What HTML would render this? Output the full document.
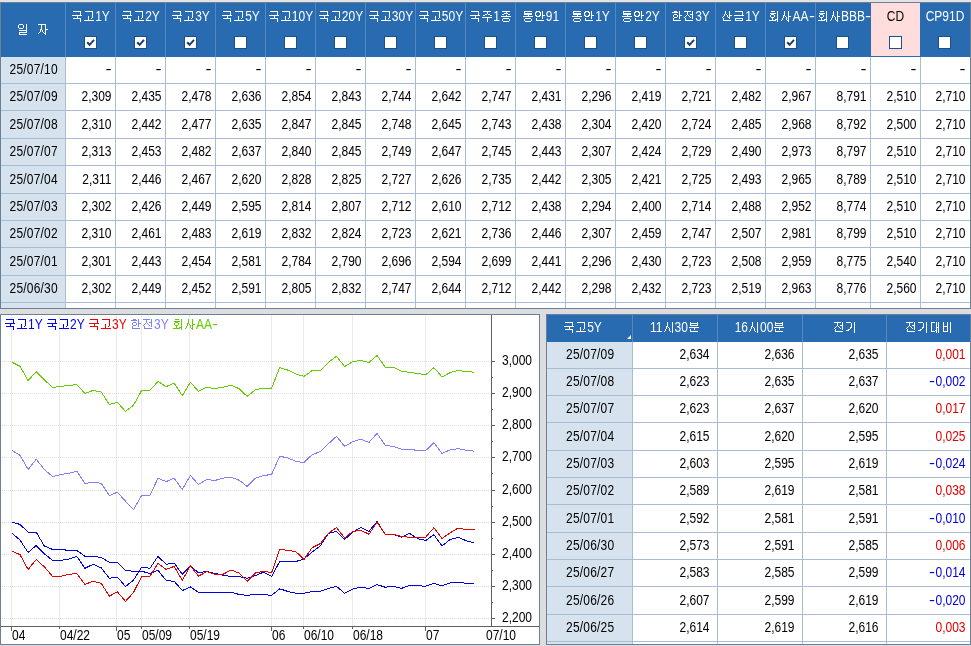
<!DOCTYPE html>
<html lang="ko"><head><meta charset="utf-8"><title>채권 금리</title>
<style>

html,body{margin:0;padding:0}
body{width:971px;height:646px;position:relative;overflow:hidden;background:#dddde0;font-family:"Liberation Sans",sans-serif;font-size:12px;color:#000}
div,span{box-sizing:border-box}
.abs,.c,.n,.d,.h,.ln{position:absolute}
.panel{will-change:transform;position:absolute;overflow:hidden;background:#fff}
.k{display:inline-block;vertical-align:-1px}
.c{white-space:nowrap;line-height:12px;height:12px}
.n{text-align:right}
.d{text-align:center}
.h{text-align:center;color:#fff}
.ln{background:#a8bdd1}
.cb{position:absolute;width:13px;height:13px;background:#fff;border:1px solid #1d4f8c}
.red{color:#e00000}.blue{color:#0000d8}
.n,.d,.t,.s{transform:scaleY(1.16);transform-origin:0 10.2px}
.t{display:inline-block;line-height:12px}
.wl{transform:scale(1.5,1.16);transform-origin:0 10.2px}
.wr{display:inline-block;transform:scaleX(1.5);transform-origin:100% 50%}
.dash{transform:scale(1.5,1.16);transform-origin:100% 10.2px}
.d{letter-spacing:0.2px;padding-left:1.4px}

</style></head><body>
<div class="abs" style="left:0;top:0;width:971px;height:2px;background:#e3e3e6"></div>
<div class="panel" id="t1" style="left:0px;top:2px;width:971px;height:307px;border:1px solid #6b8096">
<div class="abs" style="left:0px;top:0px;width:969px;height:54px;background:#296bb0"></div>
<div class="abs" style="left:0px;top:54px;width:64px;height:251px;background:#d6e2ee"></div>
<div class="abs" style="left:870px;top:0px;width:49px;height:53px;background:#ffdddd"></div>
<div class="abs" style="left:64px;top:0px;width:1px;height:54px;background:#5289c5"></div>
<div class="ln" style="left:64px;top:54px;width:1px;height:251px"></div>
<div class="abs" style="left:114px;top:0px;width:1px;height:54px;background:#5289c5"></div>
<div class="ln" style="left:114px;top:54px;width:1px;height:251px"></div>
<div class="abs" style="left:164px;top:0px;width:1px;height:54px;background:#5289c5"></div>
<div class="ln" style="left:164px;top:54px;width:1px;height:251px"></div>
<div class="abs" style="left:214px;top:0px;width:1px;height:54px;background:#5289c5"></div>
<div class="ln" style="left:214px;top:54px;width:1px;height:251px"></div>
<div class="abs" style="left:264px;top:0px;width:1px;height:54px;background:#5289c5"></div>
<div class="ln" style="left:264px;top:54px;width:1px;height:251px"></div>
<div class="abs" style="left:314px;top:0px;width:1px;height:54px;background:#5289c5"></div>
<div class="ln" style="left:314px;top:54px;width:1px;height:251px"></div>
<div class="abs" style="left:364px;top:0px;width:1px;height:54px;background:#5289c5"></div>
<div class="ln" style="left:364px;top:54px;width:1px;height:251px"></div>
<div class="abs" style="left:414px;top:0px;width:1px;height:54px;background:#5289c5"></div>
<div class="ln" style="left:414px;top:54px;width:1px;height:251px"></div>
<div class="abs" style="left:464px;top:0px;width:1px;height:54px;background:#5289c5"></div>
<div class="ln" style="left:464px;top:54px;width:1px;height:251px"></div>
<div class="abs" style="left:514px;top:0px;width:1px;height:54px;background:#5289c5"></div>
<div class="ln" style="left:514px;top:54px;width:1px;height:251px"></div>
<div class="abs" style="left:564px;top:0px;width:1px;height:54px;background:#5289c5"></div>
<div class="ln" style="left:564px;top:54px;width:1px;height:251px"></div>
<div class="abs" style="left:614px;top:0px;width:1px;height:54px;background:#5289c5"></div>
<div class="ln" style="left:614px;top:54px;width:1px;height:251px"></div>
<div class="abs" style="left:664px;top:0px;width:1px;height:54px;background:#5289c5"></div>
<div class="ln" style="left:664px;top:54px;width:1px;height:251px"></div>
<div class="abs" style="left:714px;top:0px;width:1px;height:54px;background:#5289c5"></div>
<div class="ln" style="left:714px;top:54px;width:1px;height:251px"></div>
<div class="abs" style="left:764px;top:0px;width:1px;height:54px;background:#5289c5"></div>
<div class="ln" style="left:764px;top:54px;width:1px;height:251px"></div>
<div class="abs" style="left:814px;top:0px;width:1px;height:54px;background:#5289c5"></div>
<div class="ln" style="left:814px;top:54px;width:1px;height:251px"></div>
<div class="ln" style="left:869px;top:54px;width:1px;height:251px"></div>
<div class="ln" style="left:919px;top:54px;width:1px;height:251px"></div>
<div class="ln" style="left:0px;top:80px;width:969px;height:1px"></div>
<div class="ln" style="left:0px;top:107px;width:969px;height:1px"></div>
<div class="ln" style="left:0px;top:135px;width:969px;height:1px"></div>
<div class="ln" style="left:0px;top:162px;width:969px;height:1px"></div>
<div class="ln" style="left:0px;top:190px;width:969px;height:1px"></div>
<div class="ln" style="left:0px;top:217px;width:969px;height:1px"></div>
<div class="ln" style="left:0px;top:244px;width:969px;height:1px"></div>
<div class="ln" style="left:0px;top:272px;width:969px;height:1px"></div>
<div class="ln" style="left:0px;top:299px;width:969px;height:1px"></div>
<div class="c h" style="left:0px;top:21px;width:64px"><svg class="k" width="12" height="11" viewBox="0 0 12 11" shape-rendering="crispEdges" role="img" style=""><title>일</title><path fill="#fff" d="M2 0h4v1h-4zM9 0h1v1h-1zM1 1h1v1h-1zM6 1h1v1h-1zM9 1h1v1h-1zM1 2h1v1h-1zM6 2h1v1h-1zM9 2h1v1h-1zM1 3h1v1h-1zM6 3h1v1h-1zM9 3h1v1h-1zM2 4h4v1h-4zM9 4h1v1h-1zM9 5h1v1h-1zM2 6h8v1h-8zM9 7h1v1h-1zM2 8h8v1h-8zM2 9h1v1h-1zM2 10h8v1h-8z"/></svg><span style="display:inline-block;width:8px"></span><svg class="k" width="12" height="11" viewBox="0 0 12 11" shape-rendering="crispEdges" role="img" style=""><title>자</title><path fill="#fff" d="M1 0h8v1h-8zM4 1h1v1h-1zM8 1h1v1h-1zM4 2h1v1h-1zM8 2h1v1h-1zM4 3h1v1h-1zM8 3h1v1h-1zM4 4h1v1h-1zM8 4h1v1h-1zM3 5h2v1h-2zM8 5h3v1h-3zM3 6h1v1h-1zM5 6h1v1h-1zM8 6h1v1h-1zM3 7h1v1h-1zM5 7h1v1h-1zM8 7h1v1h-1zM2 8h1v1h-1zM6 8h1v1h-1zM8 8h1v1h-1zM1 9h1v1h-1zM7 9h2v1h-2zM8 10h1v1h-1z"/></svg></div>
<div class="c h" style="left:55px;top:8px;width:69px;color:#fff"><svg class="k" width="24" height="11" viewBox="0 0 24 11" shape-rendering="crispEdges" role="img" style=""><title>국고</title><path fill="#fff" d="M2 0h8v1h-8zM14 0h8v1h-8zM9 1h1v1h-1zM21 1h1v1h-1zM9 2h1v1h-1zM21 2h1v1h-1zM9 3h1v1h-1zM21 3h1v1h-1zM1 4h10v1h-10zM21 4h1v1h-1zM6 5h1v1h-1zM17 5h1v1h-1zM21 5h1v1h-1zM6 6h1v1h-1zM17 6h1v1h-1zM21 6h1v1h-1zM2 7h8v1h-8zM17 7h1v1h-1zM20 7h1v1h-1zM9 8h1v1h-1zM17 8h1v1h-1zM9 9h1v1h-1zM13 9h10v1h-10zM9 10h1v1h-1z"/></svg><span class="t">1Y</span></div>
<div class="cb" style="left:83px;top:33px;border-color:#1d4f8c"><svg width="11" height="11" viewBox="0 0 11 11" style="position:absolute;left:0;top:0"><title>checked</title><path d="M2.2 5.2 L4.6 7.8 L9 2.8" fill="none" stroke="#1c3f73" stroke-width="2"/></svg></div>
<div class="c h" style="left:105px;top:8px;width:69px;color:#fff"><svg class="k" width="24" height="11" viewBox="0 0 24 11" shape-rendering="crispEdges" role="img" style=""><title>국고</title><path fill="#fff" d="M2 0h8v1h-8zM14 0h8v1h-8zM9 1h1v1h-1zM21 1h1v1h-1zM9 2h1v1h-1zM21 2h1v1h-1zM9 3h1v1h-1zM21 3h1v1h-1zM1 4h10v1h-10zM21 4h1v1h-1zM6 5h1v1h-1zM17 5h1v1h-1zM21 5h1v1h-1zM6 6h1v1h-1zM17 6h1v1h-1zM21 6h1v1h-1zM2 7h8v1h-8zM17 7h1v1h-1zM20 7h1v1h-1zM9 8h1v1h-1zM17 8h1v1h-1zM9 9h1v1h-1zM13 9h10v1h-10zM9 10h1v1h-1z"/></svg><span class="t">2Y</span></div>
<div class="cb" style="left:133px;top:33px;border-color:#1d4f8c"><svg width="11" height="11" viewBox="0 0 11 11" style="position:absolute;left:0;top:0"><title>checked</title><path d="M2.2 5.2 L4.6 7.8 L9 2.8" fill="none" stroke="#1c3f73" stroke-width="2"/></svg></div>
<div class="c h" style="left:155px;top:8px;width:69px;color:#fff"><svg class="k" width="24" height="11" viewBox="0 0 24 11" shape-rendering="crispEdges" role="img" style=""><title>국고</title><path fill="#fff" d="M2 0h8v1h-8zM14 0h8v1h-8zM9 1h1v1h-1zM21 1h1v1h-1zM9 2h1v1h-1zM21 2h1v1h-1zM9 3h1v1h-1zM21 3h1v1h-1zM1 4h10v1h-10zM21 4h1v1h-1zM6 5h1v1h-1zM17 5h1v1h-1zM21 5h1v1h-1zM6 6h1v1h-1zM17 6h1v1h-1zM21 6h1v1h-1zM2 7h8v1h-8zM17 7h1v1h-1zM20 7h1v1h-1zM9 8h1v1h-1zM17 8h1v1h-1zM9 9h1v1h-1zM13 9h10v1h-10zM9 10h1v1h-1z"/></svg><span class="t">3Y</span></div>
<div class="cb" style="left:183px;top:33px;border-color:#1d4f8c"><svg width="11" height="11" viewBox="0 0 11 11" style="position:absolute;left:0;top:0"><title>checked</title><path d="M2.2 5.2 L4.6 7.8 L9 2.8" fill="none" stroke="#1c3f73" stroke-width="2"/></svg></div>
<div class="c h" style="left:205px;top:8px;width:69px;color:#fff"><svg class="k" width="24" height="11" viewBox="0 0 24 11" shape-rendering="crispEdges" role="img" style=""><title>국고</title><path fill="#fff" d="M2 0h8v1h-8zM14 0h8v1h-8zM9 1h1v1h-1zM21 1h1v1h-1zM9 2h1v1h-1zM21 2h1v1h-1zM9 3h1v1h-1zM21 3h1v1h-1zM1 4h10v1h-10zM21 4h1v1h-1zM6 5h1v1h-1zM17 5h1v1h-1zM21 5h1v1h-1zM6 6h1v1h-1zM17 6h1v1h-1zM21 6h1v1h-1zM2 7h8v1h-8zM17 7h1v1h-1zM20 7h1v1h-1zM9 8h1v1h-1zM17 8h1v1h-1zM9 9h1v1h-1zM13 9h10v1h-10zM9 10h1v1h-1z"/></svg><span class="t">5Y</span></div>
<div class="cb" style="left:233px;top:33px;border-color:#1d4f8c"></div>
<div class="c h" style="left:255px;top:8px;width:69px;color:#fff"><svg class="k" width="24" height="11" viewBox="0 0 24 11" shape-rendering="crispEdges" role="img" style=""><title>국고</title><path fill="#fff" d="M2 0h8v1h-8zM14 0h8v1h-8zM9 1h1v1h-1zM21 1h1v1h-1zM9 2h1v1h-1zM21 2h1v1h-1zM9 3h1v1h-1zM21 3h1v1h-1zM1 4h10v1h-10zM21 4h1v1h-1zM6 5h1v1h-1zM17 5h1v1h-1zM21 5h1v1h-1zM6 6h1v1h-1zM17 6h1v1h-1zM21 6h1v1h-1zM2 7h8v1h-8zM17 7h1v1h-1zM20 7h1v1h-1zM9 8h1v1h-1zM17 8h1v1h-1zM9 9h1v1h-1zM13 9h10v1h-10zM9 10h1v1h-1z"/></svg><span class="t">10Y</span></div>
<div class="cb" style="left:283px;top:33px;border-color:#1d4f8c"></div>
<div class="c h" style="left:305px;top:8px;width:69px;color:#fff"><svg class="k" width="24" height="11" viewBox="0 0 24 11" shape-rendering="crispEdges" role="img" style=""><title>국고</title><path fill="#fff" d="M2 0h8v1h-8zM14 0h8v1h-8zM9 1h1v1h-1zM21 1h1v1h-1zM9 2h1v1h-1zM21 2h1v1h-1zM9 3h1v1h-1zM21 3h1v1h-1zM1 4h10v1h-10zM21 4h1v1h-1zM6 5h1v1h-1zM17 5h1v1h-1zM21 5h1v1h-1zM6 6h1v1h-1zM17 6h1v1h-1zM21 6h1v1h-1zM2 7h8v1h-8zM17 7h1v1h-1zM20 7h1v1h-1zM9 8h1v1h-1zM17 8h1v1h-1zM9 9h1v1h-1zM13 9h10v1h-10zM9 10h1v1h-1z"/></svg><span class="t">20Y</span></div>
<div class="cb" style="left:333px;top:33px;border-color:#1d4f8c"></div>
<div class="c h" style="left:355px;top:8px;width:69px;color:#fff"><svg class="k" width="24" height="11" viewBox="0 0 24 11" shape-rendering="crispEdges" role="img" style=""><title>국고</title><path fill="#fff" d="M2 0h8v1h-8zM14 0h8v1h-8zM9 1h1v1h-1zM21 1h1v1h-1zM9 2h1v1h-1zM21 2h1v1h-1zM9 3h1v1h-1zM21 3h1v1h-1zM1 4h10v1h-10zM21 4h1v1h-1zM6 5h1v1h-1zM17 5h1v1h-1zM21 5h1v1h-1zM6 6h1v1h-1zM17 6h1v1h-1zM21 6h1v1h-1zM2 7h8v1h-8zM17 7h1v1h-1zM20 7h1v1h-1zM9 8h1v1h-1zM17 8h1v1h-1zM9 9h1v1h-1zM13 9h10v1h-10zM9 10h1v1h-1z"/></svg><span class="t">30Y</span></div>
<div class="cb" style="left:383px;top:33px;border-color:#1d4f8c"></div>
<div class="c h" style="left:405px;top:8px;width:69px;color:#fff"><svg class="k" width="24" height="11" viewBox="0 0 24 11" shape-rendering="crispEdges" role="img" style=""><title>국고</title><path fill="#fff" d="M2 0h8v1h-8zM14 0h8v1h-8zM9 1h1v1h-1zM21 1h1v1h-1zM9 2h1v1h-1zM21 2h1v1h-1zM9 3h1v1h-1zM21 3h1v1h-1zM1 4h10v1h-10zM21 4h1v1h-1zM6 5h1v1h-1zM17 5h1v1h-1zM21 5h1v1h-1zM6 6h1v1h-1zM17 6h1v1h-1zM21 6h1v1h-1zM2 7h8v1h-8zM17 7h1v1h-1zM20 7h1v1h-1zM9 8h1v1h-1zM17 8h1v1h-1zM9 9h1v1h-1zM13 9h10v1h-10zM9 10h1v1h-1z"/></svg><span class="t">50Y</span></div>
<div class="cb" style="left:433px;top:33px;border-color:#1d4f8c"></div>
<div class="c h" style="left:455px;top:8px;width:69px;color:#fff"><svg class="k" width="24" height="11" viewBox="0 0 24 11" shape-rendering="crispEdges" role="img" style=""><title>국주</title><path fill="#fff" d="M2 0h8v1h-8zM14 0h8v1h-8zM9 1h1v1h-1zM18 1h1v1h-1zM9 2h1v1h-1zM18 2h1v1h-1zM9 3h1v1h-1zM16 3h2v1h-2zM19 3h2v1h-2zM1 4h10v1h-10zM14 4h2v1h-2zM21 4h2v1h-2zM6 5h1v1h-1zM6 6h1v1h-1zM13 6h10v1h-10zM2 7h8v1h-8zM18 7h1v1h-1zM9 8h1v1h-1zM18 8h1v1h-1zM9 9h1v1h-1zM18 9h1v1h-1zM9 10h1v1h-1zM18 10h1v1h-1z"/></svg><span class="t">1</span><svg class="k" width="12" height="11" viewBox="0 0 12 11" shape-rendering="crispEdges" role="img" style=""><title>종</title><path fill="#fff" d="M2 0h8v1h-8zM6 1h1v1h-1zM4 2h4v1h-4zM2 3h2v1h-2zM8 3h2v1h-2zM6 4h1v1h-1zM1 5h10v1h-10zM3 7h6v1h-6zM2 8h1v1h-1zM9 8h1v1h-1zM2 9h1v1h-1zM9 9h1v1h-1zM3 10h6v1h-6z"/></svg></div>
<div class="cb" style="left:483px;top:33px;border-color:#1d4f8c"></div>
<div class="c h" style="left:505px;top:8px;width:69px;color:#fff"><svg class="k" width="24" height="11" viewBox="0 0 24 11" shape-rendering="crispEdges" role="img" style=""><title>통안</title><path fill="#fff" d="M2 0h8v1h-8zM14 0h4v1h-4zM20 0h1v1h-1zM2 1h1v1h-1zM13 1h2v1h-2zM17 1h2v1h-2zM20 1h1v1h-1zM2 2h8v1h-8zM13 2h1v1h-1zM18 2h1v1h-1zM20 2h1v1h-1zM2 3h8v1h-8zM13 3h1v1h-1zM18 3h1v1h-1zM20 3h1v1h-1zM6 4h1v1h-1zM13 4h2v1h-2zM17 4h2v1h-2zM20 4h3v1h-3zM1 5h10v1h-10zM14 5h4v1h-4zM20 5h1v1h-1zM20 6h1v1h-1zM3 7h6v1h-6zM14 7h1v1h-1zM20 7h1v1h-1zM2 8h1v1h-1zM9 8h1v1h-1zM14 8h1v1h-1zM2 9h1v1h-1zM9 9h1v1h-1zM14 9h8v1h-8zM3 10h6v1h-6z"/></svg><span class="t">91</span></div>
<div class="cb" style="left:533px;top:33px;border-color:#1d4f8c"></div>
<div class="c h" style="left:555px;top:8px;width:69px;color:#fff"><svg class="k" width="24" height="11" viewBox="0 0 24 11" shape-rendering="crispEdges" role="img" style=""><title>통안</title><path fill="#fff" d="M2 0h8v1h-8zM14 0h4v1h-4zM20 0h1v1h-1zM2 1h1v1h-1zM13 1h2v1h-2zM17 1h2v1h-2zM20 1h1v1h-1zM2 2h8v1h-8zM13 2h1v1h-1zM18 2h1v1h-1zM20 2h1v1h-1zM2 3h8v1h-8zM13 3h1v1h-1zM18 3h1v1h-1zM20 3h1v1h-1zM6 4h1v1h-1zM13 4h2v1h-2zM17 4h2v1h-2zM20 4h3v1h-3zM1 5h10v1h-10zM14 5h4v1h-4zM20 5h1v1h-1zM20 6h1v1h-1zM3 7h6v1h-6zM14 7h1v1h-1zM20 7h1v1h-1zM2 8h1v1h-1zM9 8h1v1h-1zM14 8h1v1h-1zM2 9h1v1h-1zM9 9h1v1h-1zM14 9h8v1h-8zM3 10h6v1h-6z"/></svg><span class="t">1Y</span></div>
<div class="cb" style="left:583px;top:33px;border-color:#1d4f8c"></div>
<div class="c h" style="left:605px;top:8px;width:69px;color:#fff"><svg class="k" width="24" height="11" viewBox="0 0 24 11" shape-rendering="crispEdges" role="img" style=""><title>통안</title><path fill="#fff" d="M2 0h8v1h-8zM14 0h4v1h-4zM20 0h1v1h-1zM2 1h1v1h-1zM13 1h2v1h-2zM17 1h2v1h-2zM20 1h1v1h-1zM2 2h8v1h-8zM13 2h1v1h-1zM18 2h1v1h-1zM20 2h1v1h-1zM2 3h8v1h-8zM13 3h1v1h-1zM18 3h1v1h-1zM20 3h1v1h-1zM6 4h1v1h-1zM13 4h2v1h-2zM17 4h2v1h-2zM20 4h3v1h-3zM1 5h10v1h-10zM14 5h4v1h-4zM20 5h1v1h-1zM20 6h1v1h-1zM3 7h6v1h-6zM14 7h1v1h-1zM20 7h1v1h-1zM2 8h1v1h-1zM9 8h1v1h-1zM14 8h1v1h-1zM2 9h1v1h-1zM9 9h1v1h-1zM14 9h8v1h-8zM3 10h6v1h-6z"/></svg><span class="t">2Y</span></div>
<div class="cb" style="left:633px;top:33px;border-color:#1d4f8c"></div>
<div class="c h" style="left:655px;top:8px;width:69px;color:#fff"><svg class="k" width="24" height="11" viewBox="0 0 24 11" shape-rendering="crispEdges" role="img" style=""><title>한전</title><path fill="#fff" d="M3 0h3v1h-3zM8 0h1v1h-1zM13 0h7v1h-7zM21 0h1v1h-1zM1 1h6v1h-6zM8 1h1v1h-1zM16 1h1v1h-1zM21 1h1v1h-1zM8 2h1v1h-1zM16 2h1v1h-1zM21 2h1v1h-1zM3 3h3v1h-3zM8 3h1v1h-1zM16 3h1v1h-1zM19 3h3v1h-3zM2 4h1v1h-1zM6 4h1v1h-1zM8 4h3v1h-3zM15 4h1v1h-1zM17 4h1v1h-1zM21 4h1v1h-1zM2 5h1v1h-1zM6 5h1v1h-1zM8 5h1v1h-1zM14 5h1v1h-1zM18 5h1v1h-1zM21 5h1v1h-1zM3 6h3v1h-3zM8 6h1v1h-1zM13 6h1v1h-1zM19 6h1v1h-1zM21 6h1v1h-1zM2 7h1v1h-1zM8 7h1v1h-1zM14 7h1v1h-1zM21 7h1v1h-1zM2 8h1v1h-1zM14 8h1v1h-1zM2 9h8v1h-8zM14 9h8v1h-8z"/></svg><span class="t">3Y</span></div>
<div class="cb" style="left:683px;top:33px;border-color:#1d4f8c"><svg width="11" height="11" viewBox="0 0 11 11" style="position:absolute;left:0;top:0"><title>checked</title><path d="M2.2 5.2 L4.6 7.8 L9 2.8" fill="none" stroke="#1c3f73" stroke-width="2"/></svg></div>
<div class="c h" style="left:705px;top:8px;width:69px;color:#fff"><svg class="k" width="24" height="11" viewBox="0 0 24 11" shape-rendering="crispEdges" role="img" style=""><title>산금</title><path fill="#fff" d="M4 0h1v1h-1zM8 0h1v1h-1zM14 0h8v1h-8zM4 1h1v1h-1zM8 1h1v1h-1zM21 1h1v1h-1zM4 2h1v1h-1zM8 2h1v1h-1zM21 2h1v1h-1zM3 3h1v1h-1zM5 3h1v1h-1zM8 3h1v1h-1zM21 3h1v1h-1zM3 4h1v1h-1zM6 4h1v1h-1zM8 4h3v1h-3zM13 4h10v1h-10zM2 5h1v1h-1zM6 5h1v1h-1zM8 5h1v1h-1zM1 6h1v1h-1zM7 6h2v1h-2zM2 7h1v1h-1zM8 7h1v1h-1zM14 7h8v1h-8zM2 8h1v1h-1zM14 8h1v1h-1zM21 8h1v1h-1zM2 9h8v1h-8zM14 9h8v1h-8z"/></svg><span class="t">1Y</span></div>
<div class="cb" style="left:733px;top:33px;border-color:#1d4f8c"></div>
<div class="c h" style="left:755px;top:8px;width:69px;color:#fff"><svg class="k" width="24" height="11" viewBox="0 0 24 11" shape-rendering="crispEdges" role="img" style=""><title>회사</title><path fill="#fff" d="M3 0h4v1h-4zM9 0h1v1h-1zM16 0h1v1h-1zM20 0h1v1h-1zM9 1h1v1h-1zM16 1h1v1h-1zM20 1h1v1h-1zM2 2h6v1h-6zM9 2h1v1h-1zM16 2h1v1h-1zM20 2h1v1h-1zM3 3h3v1h-3zM9 3h1v1h-1zM16 3h1v1h-1zM20 3h1v1h-1zM2 4h1v1h-1zM6 4h1v1h-1zM9 4h1v1h-1zM15 4h2v1h-2zM20 4h1v1h-1zM2 5h1v1h-1zM6 5h1v1h-1zM9 5h1v1h-1zM15 5h1v1h-1zM17 5h1v1h-1zM20 5h3v1h-3zM3 6h3v1h-3zM9 6h1v1h-1zM15 6h1v1h-1zM18 6h1v1h-1zM20 6h1v1h-1zM4 7h1v1h-1zM9 7h1v1h-1zM14 7h1v1h-1zM18 7h1v1h-1zM20 7h1v1h-1zM4 8h1v1h-1zM7 8h3v1h-3zM14 8h1v1h-1zM18 8h1v1h-1zM20 8h1v1h-1zM1 9h7v1h-7zM9 9h1v1h-1zM13 9h1v1h-1zM19 9h2v1h-2zM9 10h1v1h-1zM20 10h1v1h-1z"/></svg><span class="t">AA</span><span class="t wl">-</span></div>
<div class="cb" style="left:783px;top:33px;border-color:#1d4f8c"><svg width="11" height="11" viewBox="0 0 11 11" style="position:absolute;left:0;top:0"><title>checked</title><path d="M2.2 5.2 L4.6 7.8 L9 2.8" fill="none" stroke="#1c3f73" stroke-width="2"/></svg></div>
<div class="c h" style="left:805px;top:8px;width:74px;color:#fff"><svg class="k" width="24" height="11" viewBox="0 0 24 11" shape-rendering="crispEdges" role="img" style=""><title>회사</title><path fill="#fff" d="M3 0h4v1h-4zM9 0h1v1h-1zM16 0h1v1h-1zM20 0h1v1h-1zM9 1h1v1h-1zM16 1h1v1h-1zM20 1h1v1h-1zM2 2h6v1h-6zM9 2h1v1h-1zM16 2h1v1h-1zM20 2h1v1h-1zM3 3h3v1h-3zM9 3h1v1h-1zM16 3h1v1h-1zM20 3h1v1h-1zM2 4h1v1h-1zM6 4h1v1h-1zM9 4h1v1h-1zM15 4h2v1h-2zM20 4h1v1h-1zM2 5h1v1h-1zM6 5h1v1h-1zM9 5h1v1h-1zM15 5h1v1h-1zM17 5h1v1h-1zM20 5h3v1h-3zM3 6h3v1h-3zM9 6h1v1h-1zM15 6h1v1h-1zM18 6h1v1h-1zM20 6h1v1h-1zM4 7h1v1h-1zM9 7h1v1h-1zM14 7h1v1h-1zM18 7h1v1h-1zM20 7h1v1h-1zM4 8h1v1h-1zM7 8h3v1h-3zM14 8h1v1h-1zM18 8h1v1h-1zM20 8h1v1h-1zM1 9h7v1h-7zM9 9h1v1h-1zM13 9h1v1h-1zM19 9h2v1h-2zM9 10h1v1h-1zM20 10h1v1h-1z"/></svg><span class="t">BBB</span><span class="t wl">-</span></div>
<div class="cb" style="left:835px;top:33px;border-color:#1d4f8c"></div>
<div class="c h" style="left:860px;top:8px;width:69px;color:#000"><span class="t">CD</span></div>
<div class="cb" style="left:888px;top:33px;border-color:#1d4f8c"></div>
<div class="c h" style="left:910px;top:8px;width:68px;color:#fff"><span class="t">CP91D</span></div>
<div class="cb" style="left:937px;top:33px;border-color:#1d4f8c"></div>
<div class="c d" style="left:0px;top:61px;width:64px">25/07/10</div>
<div class="c n dash" style="left:65px;top:61px;width:45.5px">-</div>
<div class="c n dash" style="left:115px;top:61px;width:45.5px">-</div>
<div class="c n dash" style="left:165px;top:61px;width:45.5px">-</div>
<div class="c n dash" style="left:215px;top:61px;width:45.5px">-</div>
<div class="c n dash" style="left:265px;top:61px;width:45.5px">-</div>
<div class="c n dash" style="left:315px;top:61px;width:45.5px">-</div>
<div class="c n dash" style="left:365px;top:61px;width:45.5px">-</div>
<div class="c n dash" style="left:415px;top:61px;width:45.5px">-</div>
<div class="c n dash" style="left:465px;top:61px;width:45.5px">-</div>
<div class="c n dash" style="left:515px;top:61px;width:45.5px">-</div>
<div class="c n dash" style="left:565px;top:61px;width:45.5px">-</div>
<div class="c n dash" style="left:615px;top:61px;width:45.5px">-</div>
<div class="c n dash" style="left:665px;top:61px;width:45.5px">-</div>
<div class="c n dash" style="left:715px;top:61px;width:45.5px">-</div>
<div class="c n dash" style="left:765px;top:61px;width:45.5px">-</div>
<div class="c n dash" style="left:815px;top:61px;width:50.5px">-</div>
<div class="c n dash" style="left:870px;top:61px;width:45.5px">-</div>
<div class="c n dash" style="left:920px;top:61px;width:44.5px">-</div>
<div class="c d" style="left:0px;top:88px;width:64px">25/07/09</div>
<div class="c n" style="left:65px;top:88px;width:45.5px">2,309</div>
<div class="c n" style="left:115px;top:88px;width:45.5px">2,435</div>
<div class="c n" style="left:165px;top:88px;width:45.5px">2,478</div>
<div class="c n" style="left:215px;top:88px;width:45.5px">2,636</div>
<div class="c n" style="left:265px;top:88px;width:45.5px">2,854</div>
<div class="c n" style="left:315px;top:88px;width:45.5px">2,843</div>
<div class="c n" style="left:365px;top:88px;width:45.5px">2,744</div>
<div class="c n" style="left:415px;top:88px;width:45.5px">2,642</div>
<div class="c n" style="left:465px;top:88px;width:45.5px">2,747</div>
<div class="c n" style="left:515px;top:88px;width:45.5px">2,431</div>
<div class="c n" style="left:565px;top:88px;width:45.5px">2,296</div>
<div class="c n" style="left:615px;top:88px;width:45.5px">2,419</div>
<div class="c n" style="left:665px;top:88px;width:45.5px">2,721</div>
<div class="c n" style="left:715px;top:88px;width:45.5px">2,482</div>
<div class="c n" style="left:765px;top:88px;width:45.5px">2,967</div>
<div class="c n" style="left:815px;top:88px;width:50.5px">8,791</div>
<div class="c n" style="left:870px;top:88px;width:45.5px">2,510</div>
<div class="c n" style="left:920px;top:88px;width:44.5px">2,710</div>
<div class="c d" style="left:0px;top:116px;width:64px">25/07/08</div>
<div class="c n" style="left:65px;top:116px;width:45.5px">2,310</div>
<div class="c n" style="left:115px;top:116px;width:45.5px">2,442</div>
<div class="c n" style="left:165px;top:116px;width:45.5px">2,477</div>
<div class="c n" style="left:215px;top:116px;width:45.5px">2,635</div>
<div class="c n" style="left:265px;top:116px;width:45.5px">2,847</div>
<div class="c n" style="left:315px;top:116px;width:45.5px">2,845</div>
<div class="c n" style="left:365px;top:116px;width:45.5px">2,748</div>
<div class="c n" style="left:415px;top:116px;width:45.5px">2,645</div>
<div class="c n" style="left:465px;top:116px;width:45.5px">2,743</div>
<div class="c n" style="left:515px;top:116px;width:45.5px">2,438</div>
<div class="c n" style="left:565px;top:116px;width:45.5px">2,304</div>
<div class="c n" style="left:615px;top:116px;width:45.5px">2,420</div>
<div class="c n" style="left:665px;top:116px;width:45.5px">2,724</div>
<div class="c n" style="left:715px;top:116px;width:45.5px">2,485</div>
<div class="c n" style="left:765px;top:116px;width:45.5px">2,968</div>
<div class="c n" style="left:815px;top:116px;width:50.5px">8,792</div>
<div class="c n" style="left:870px;top:116px;width:45.5px">2,500</div>
<div class="c n" style="left:920px;top:116px;width:44.5px">2,710</div>
<div class="c d" style="left:0px;top:143px;width:64px">25/07/07</div>
<div class="c n" style="left:65px;top:143px;width:45.5px">2,313</div>
<div class="c n" style="left:115px;top:143px;width:45.5px">2,453</div>
<div class="c n" style="left:165px;top:143px;width:45.5px">2,482</div>
<div class="c n" style="left:215px;top:143px;width:45.5px">2,637</div>
<div class="c n" style="left:265px;top:143px;width:45.5px">2,840</div>
<div class="c n" style="left:315px;top:143px;width:45.5px">2,845</div>
<div class="c n" style="left:365px;top:143px;width:45.5px">2,749</div>
<div class="c n" style="left:415px;top:143px;width:45.5px">2,647</div>
<div class="c n" style="left:465px;top:143px;width:45.5px">2,745</div>
<div class="c n" style="left:515px;top:143px;width:45.5px">2,443</div>
<div class="c n" style="left:565px;top:143px;width:45.5px">2,307</div>
<div class="c n" style="left:615px;top:143px;width:45.5px">2,424</div>
<div class="c n" style="left:665px;top:143px;width:45.5px">2,729</div>
<div class="c n" style="left:715px;top:143px;width:45.5px">2,490</div>
<div class="c n" style="left:765px;top:143px;width:45.5px">2,973</div>
<div class="c n" style="left:815px;top:143px;width:50.5px">8,797</div>
<div class="c n" style="left:870px;top:143px;width:45.5px">2,510</div>
<div class="c n" style="left:920px;top:143px;width:44.5px">2,710</div>
<div class="c d" style="left:0px;top:171px;width:64px">25/07/04</div>
<div class="c n" style="left:65px;top:171px;width:45.5px">2,311</div>
<div class="c n" style="left:115px;top:171px;width:45.5px">2,446</div>
<div class="c n" style="left:165px;top:171px;width:45.5px">2,467</div>
<div class="c n" style="left:215px;top:171px;width:45.5px">2,620</div>
<div class="c n" style="left:265px;top:171px;width:45.5px">2,828</div>
<div class="c n" style="left:315px;top:171px;width:45.5px">2,825</div>
<div class="c n" style="left:365px;top:171px;width:45.5px">2,727</div>
<div class="c n" style="left:415px;top:171px;width:45.5px">2,626</div>
<div class="c n" style="left:465px;top:171px;width:45.5px">2,735</div>
<div class="c n" style="left:515px;top:171px;width:45.5px">2,442</div>
<div class="c n" style="left:565px;top:171px;width:45.5px">2,305</div>
<div class="c n" style="left:615px;top:171px;width:45.5px">2,421</div>
<div class="c n" style="left:665px;top:171px;width:45.5px">2,725</div>
<div class="c n" style="left:715px;top:171px;width:45.5px">2,493</div>
<div class="c n" style="left:765px;top:171px;width:45.5px">2,965</div>
<div class="c n" style="left:815px;top:171px;width:50.5px">8,789</div>
<div class="c n" style="left:870px;top:171px;width:45.5px">2,510</div>
<div class="c n" style="left:920px;top:171px;width:44.5px">2,710</div>
<div class="c d" style="left:0px;top:198px;width:64px">25/07/03</div>
<div class="c n" style="left:65px;top:198px;width:45.5px">2,302</div>
<div class="c n" style="left:115px;top:198px;width:45.5px">2,426</div>
<div class="c n" style="left:165px;top:198px;width:45.5px">2,449</div>
<div class="c n" style="left:215px;top:198px;width:45.5px">2,595</div>
<div class="c n" style="left:265px;top:198px;width:45.5px">2,814</div>
<div class="c n" style="left:315px;top:198px;width:45.5px">2,807</div>
<div class="c n" style="left:365px;top:198px;width:45.5px">2,712</div>
<div class="c n" style="left:415px;top:198px;width:45.5px">2,610</div>
<div class="c n" style="left:465px;top:198px;width:45.5px">2,712</div>
<div class="c n" style="left:515px;top:198px;width:45.5px">2,438</div>
<div class="c n" style="left:565px;top:198px;width:45.5px">2,294</div>
<div class="c n" style="left:615px;top:198px;width:45.5px">2,400</div>
<div class="c n" style="left:665px;top:198px;width:45.5px">2,714</div>
<div class="c n" style="left:715px;top:198px;width:45.5px">2,488</div>
<div class="c n" style="left:765px;top:198px;width:45.5px">2,952</div>
<div class="c n" style="left:815px;top:198px;width:50.5px">8,774</div>
<div class="c n" style="left:870px;top:198px;width:45.5px">2,510</div>
<div class="c n" style="left:920px;top:198px;width:44.5px">2,710</div>
<div class="c d" style="left:0px;top:225px;width:64px">25/07/02</div>
<div class="c n" style="left:65px;top:225px;width:45.5px">2,310</div>
<div class="c n" style="left:115px;top:225px;width:45.5px">2,461</div>
<div class="c n" style="left:165px;top:225px;width:45.5px">2,483</div>
<div class="c n" style="left:215px;top:225px;width:45.5px">2,619</div>
<div class="c n" style="left:265px;top:225px;width:45.5px">2,832</div>
<div class="c n" style="left:315px;top:225px;width:45.5px">2,824</div>
<div class="c n" style="left:365px;top:225px;width:45.5px">2,723</div>
<div class="c n" style="left:415px;top:225px;width:45.5px">2,621</div>
<div class="c n" style="left:465px;top:225px;width:45.5px">2,736</div>
<div class="c n" style="left:515px;top:225px;width:45.5px">2,446</div>
<div class="c n" style="left:565px;top:225px;width:45.5px">2,307</div>
<div class="c n" style="left:615px;top:225px;width:45.5px">2,459</div>
<div class="c n" style="left:665px;top:225px;width:45.5px">2,747</div>
<div class="c n" style="left:715px;top:225px;width:45.5px">2,507</div>
<div class="c n" style="left:765px;top:225px;width:45.5px">2,981</div>
<div class="c n" style="left:815px;top:225px;width:50.5px">8,799</div>
<div class="c n" style="left:870px;top:225px;width:45.5px">2,510</div>
<div class="c n" style="left:920px;top:225px;width:44.5px">2,710</div>
<div class="c d" style="left:0px;top:253px;width:64px">25/07/01</div>
<div class="c n" style="left:65px;top:253px;width:45.5px">2,301</div>
<div class="c n" style="left:115px;top:253px;width:45.5px">2,443</div>
<div class="c n" style="left:165px;top:253px;width:45.5px">2,454</div>
<div class="c n" style="left:215px;top:253px;width:45.5px">2,581</div>
<div class="c n" style="left:265px;top:253px;width:45.5px">2,784</div>
<div class="c n" style="left:315px;top:253px;width:45.5px">2,790</div>
<div class="c n" style="left:365px;top:253px;width:45.5px">2,696</div>
<div class="c n" style="left:415px;top:253px;width:45.5px">2,594</div>
<div class="c n" style="left:465px;top:253px;width:45.5px">2,699</div>
<div class="c n" style="left:515px;top:253px;width:45.5px">2,441</div>
<div class="c n" style="left:565px;top:253px;width:45.5px">2,296</div>
<div class="c n" style="left:615px;top:253px;width:45.5px">2,430</div>
<div class="c n" style="left:665px;top:253px;width:45.5px">2,723</div>
<div class="c n" style="left:715px;top:253px;width:45.5px">2,508</div>
<div class="c n" style="left:765px;top:253px;width:45.5px">2,959</div>
<div class="c n" style="left:815px;top:253px;width:50.5px">8,775</div>
<div class="c n" style="left:870px;top:253px;width:45.5px">2,540</div>
<div class="c n" style="left:920px;top:253px;width:44.5px">2,710</div>
<div class="c d" style="left:0px;top:280px;width:64px">25/06/30</div>
<div class="c n" style="left:65px;top:280px;width:45.5px">2,302</div>
<div class="c n" style="left:115px;top:280px;width:45.5px">2,449</div>
<div class="c n" style="left:165px;top:280px;width:45.5px">2,452</div>
<div class="c n" style="left:215px;top:280px;width:45.5px">2,591</div>
<div class="c n" style="left:265px;top:280px;width:45.5px">2,805</div>
<div class="c n" style="left:315px;top:280px;width:45.5px">2,832</div>
<div class="c n" style="left:365px;top:280px;width:45.5px">2,747</div>
<div class="c n" style="left:415px;top:280px;width:45.5px">2,644</div>
<div class="c n" style="left:465px;top:280px;width:45.5px">2,712</div>
<div class="c n" style="left:515px;top:280px;width:45.5px">2,442</div>
<div class="c n" style="left:565px;top:280px;width:45.5px">2,298</div>
<div class="c n" style="left:615px;top:280px;width:45.5px">2,432</div>
<div class="c n" style="left:665px;top:280px;width:45.5px">2,723</div>
<div class="c n" style="left:715px;top:280px;width:45.5px">2,519</div>
<div class="c n" style="left:765px;top:280px;width:45.5px">2,963</div>
<div class="c n" style="left:815px;top:280px;width:50.5px">8,776</div>
<div class="c n" style="left:870px;top:280px;width:45.5px">2,560</div>
<div class="c n" style="left:920px;top:280px;width:44.5px">2,710</div>
</div>
<div class="panel" id="chart" style="left:0px;top:314px;width:540px;height:331px;border:1px solid #6b8096">
<svg class="abs" style="left:0;top:0" width="538" height="329" viewBox="1 315 538 329"><title>금리 추이 차트</title><path d="M11.5 315V626" stroke="#ebebeb" stroke-width="1" shape-rendering="crispEdges"/><path d="M11.5 627v4" stroke="#606060" stroke-width="1" shape-rendering="crispEdges"/><path d="M59.5 315V626" stroke="#ebebeb" stroke-width="1" shape-rendering="crispEdges"/><path d="M59.5 627v2" stroke="#606060" stroke-width="1" shape-rendering="crispEdges"/><path d="M116.5 315V626" stroke="#ebebeb" stroke-width="1" shape-rendering="crispEdges"/><path d="M116.5 627v4" stroke="#606060" stroke-width="1" shape-rendering="crispEdges"/><path d="M141.5 315V626" stroke="#ebebeb" stroke-width="1" shape-rendering="crispEdges"/><path d="M141.5 627v2" stroke="#606060" stroke-width="1" shape-rendering="crispEdges"/><path d="M189.5 315V626" stroke="#ebebeb" stroke-width="1" shape-rendering="crispEdges"/><path d="M189.5 627v2" stroke="#606060" stroke-width="1" shape-rendering="crispEdges"/><path d="M271.5 315V626" stroke="#ebebeb" stroke-width="1" shape-rendering="crispEdges"/><path d="M271.5 627v4" stroke="#606060" stroke-width="1" shape-rendering="crispEdges"/><path d="M303.5 315V626" stroke="#ebebeb" stroke-width="1" shape-rendering="crispEdges"/><path d="M303.5 627v2" stroke="#606060" stroke-width="1" shape-rendering="crispEdges"/><path d="M352.5 315V626" stroke="#ebebeb" stroke-width="1" shape-rendering="crispEdges"/><path d="M352.5 627v2" stroke="#606060" stroke-width="1" shape-rendering="crispEdges"/><path d="M425.5 315V626" stroke="#ebebeb" stroke-width="1" shape-rendering="crispEdges"/><path d="M425.5 627v4" stroke="#606060" stroke-width="1" shape-rendering="crispEdges"/><path d="M2 361.5H490" stroke="#dcdcdc" stroke-width="1" stroke-dasharray="1 1" shape-rendering="crispEdges"/><path d="M2 393.5H490" stroke="#dcdcdc" stroke-width="1" stroke-dasharray="1 1" shape-rendering="crispEdges"/><path d="M2 425.5H490" stroke="#dcdcdc" stroke-width="1" stroke-dasharray="1 1" shape-rendering="crispEdges"/><path d="M2 457.5H490" stroke="#dcdcdc" stroke-width="1" stroke-dasharray="1 1" shape-rendering="crispEdges"/><path d="M2 490.5H490" stroke="#dcdcdc" stroke-width="1" stroke-dasharray="1 1" shape-rendering="crispEdges"/><path d="M2 522.5H490" stroke="#dcdcdc" stroke-width="1" stroke-dasharray="1 1" shape-rendering="crispEdges"/><path d="M2 554.5H490" stroke="#dcdcdc" stroke-width="1" stroke-dasharray="1 1" shape-rendering="crispEdges"/><path d="M2 586.5H490" stroke="#dcdcdc" stroke-width="1" stroke-dasharray="1 1" shape-rendering="crispEdges"/><path d="M2 618.5H490" stroke="#dcdcdc" stroke-width="1" stroke-dasharray="1 1" shape-rendering="crispEdges"/><path d="M491.5 315V627" stroke="#606060" stroke-width="1" shape-rendering="crispEdges"/><path d="M1 626.5H539" stroke="#606060" stroke-width="1" shape-rendering="crispEdges"/><path d="M492 361.5h3" stroke="#606060" stroke-width="1" shape-rendering="crispEdges"/><path d="M492 393.5h3" stroke="#606060" stroke-width="1" shape-rendering="crispEdges"/><path d="M492 425.5h3" stroke="#606060" stroke-width="1" shape-rendering="crispEdges"/><path d="M492 457.5h3" stroke="#606060" stroke-width="1" shape-rendering="crispEdges"/><path d="M492 490.5h3" stroke="#606060" stroke-width="1" shape-rendering="crispEdges"/><path d="M492 522.5h3" stroke="#606060" stroke-width="1" shape-rendering="crispEdges"/><path d="M492 554.5h3" stroke="#606060" stroke-width="1" shape-rendering="crispEdges"/><path d="M492 586.5h3" stroke="#606060" stroke-width="1" shape-rendering="crispEdges"/><path d="M492 618.5h3" stroke="#606060" stroke-width="1" shape-rendering="crispEdges"/><path d="M492 377.5h1" stroke="#606060" stroke-width="1" shape-rendering="crispEdges"/><path d="M492 409.5h1" stroke="#606060" stroke-width="1" shape-rendering="crispEdges"/><path d="M492 441.5h1" stroke="#606060" stroke-width="1" shape-rendering="crispEdges"/><path d="M492 473.5h1" stroke="#606060" stroke-width="1" shape-rendering="crispEdges"/><path d="M492 506.5h1" stroke="#606060" stroke-width="1" shape-rendering="crispEdges"/><path d="M492 538.5h1" stroke="#606060" stroke-width="1" shape-rendering="crispEdges"/><path d="M492 570.5h1" stroke="#606060" stroke-width="1" shape-rendering="crispEdges"/><path d="M492 602.5h1" stroke="#606060" stroke-width="1" shape-rendering="crispEdges"/><polyline points="11.9,362.2 20.0,366.3 28.1,380.6 36.2,371.5 44.4,379.9 52.5,387.4 60.6,386.4 68.7,385.5 76.8,384.5 84.9,393.4 93.1,390.4 101.2,392.0 109.3,404.4 117.4,402.3 125.5,411.4 133.6,405.1 141.7,390.4 149.9,390.4 158.0,381.5 166.1,386.6 174.2,383.2 182.3,395.7 190.4,382.2 198.5,391.3 206.7,387.3 214.8,388.5 222.9,387.3 231.0,385.3 239.1,388.7 247.2,396.4 255.4,389.7 263.5,388.3 271.6,388.3 279.7,367.5 287.8,370.1 295.9,374.1 304.0,376.4 312.2,370.6 320.3,370.6 328.4,362.4 336.5,356.3 344.6,366.6 352.7,361.7 360.8,360.5 369.0,362.4 377.1,355.4 385.2,367.3 393.3,367.3 401.4,371.2 409.5,372.4 417.6,373.4 425.8,374.7 433.9,367.6 442.0,376.9 450.1,372.7 458.2,370.2 466.3,371.8 474.5,372.1" fill="none" stroke="#66cc00" stroke-width="1" shape-rendering="crispEdges"/><polyline points="11.9,450.4 20.0,455.3 28.1,469.5 36.2,459.3 44.4,469.5 52.5,476.5 60.6,474.6 68.7,473.3 76.8,471.2 84.9,483.5 93.1,482.3 101.2,483.3 109.3,495.6 117.4,492.2 125.5,501.2 133.6,509.4 141.7,495.4 149.9,495.4 158.0,478.2 166.1,481.6 174.2,478.2 182.3,489.6 190.4,475.4 198.5,484.5 206.7,479.5 214.8,480.5 222.9,478.2 231.0,477.2 239.1,480.2 247.2,486.5 255.4,478.2 263.5,475.6 271.6,474.4 279.7,456.2 287.8,457.9 295.9,461.4 304.0,462.5 312.2,454.6 320.3,451.6 328.4,443.8 336.5,436.3 344.6,446.4 352.7,441.7 360.8,439.3 369.0,442.4 377.1,433.3 385.2,445.4 393.3,446.4 401.4,449.2 409.5,449.2 417.6,450.5 425.8,450.5 433.9,442.8 442.0,453.4 450.1,449.9 458.2,448.6 466.3,450.2 474.5,451.2" fill="none" stroke="#8080ff" stroke-width="1" shape-rendering="crispEdges"/><polyline points="11.9,522.3 20.0,524.4 28.1,532.2 36.2,532.2 44.4,546.1 52.5,549.4 60.6,549.4 68.7,550.4 76.8,550.4 84.9,556.2 93.1,556.2 101.2,557.6 109.3,562.2 117.4,562.2 125.5,570.4 133.6,571.3 141.7,571.3 149.9,573.4 158.0,570.4 166.1,580.4 174.2,581.4 182.3,590.5 190.4,587.0 198.5,592.3 206.7,592.3 214.8,592.3 222.9,592.3 231.0,592.3 239.1,594.4 247.2,595.4 255.4,594.4 263.5,594.4 271.6,595.4 279.7,588.8 287.8,591.4 295.9,593.3 304.0,593.3 312.2,591.4 320.3,591.4 328.4,588.4 336.5,586.3 344.6,593.3 352.7,589.1 360.8,587.2 369.0,588.4 377.1,584.6 385.2,587.2 393.3,586.3 401.4,588.4 409.5,585.5 417.6,585.8 425.8,586.2 433.9,583.3 442.0,585.8 450.1,582.9 458.2,582.3 466.3,583.3 474.5,583.6" fill="none" stroke="#0000e0" stroke-width="1" shape-rendering="crispEdges"/><polyline points="11.9,533.1 20.0,540.1 28.1,552.4 36.2,545.5 44.4,553.8 52.5,560.4 60.6,560.4 68.7,559.0 76.8,556.4 84.9,568.3 93.1,564.3 101.2,567.8 109.3,578.3 117.4,577.1 125.5,586.5 133.6,580.0 141.7,567.2 149.9,568.3 158.0,556.4 166.1,564.3 174.2,563.0 182.3,574.4 190.4,566.0 198.5,572.7 206.7,571.3 214.8,573.4 222.9,575.1 231.0,576.5 239.1,576.5 247.2,578.3 255.4,575.7 263.5,572.1 271.6,576.5 279.7,561.5 287.8,561.5 295.9,561.5 304.0,559.0 312.2,552.0 320.3,545.9 328.4,533.3 336.5,531.4 344.6,539.4 352.7,532.4 360.8,527.5 369.0,531.4 377.1,521.4 385.2,534.3 393.3,534.3 401.4,537.3 409.5,533.3 417.6,538.6 425.8,540.5 433.9,534.7 442.0,546.0 450.1,539.6 458.2,537.3 466.3,540.8 474.5,543.1" fill="none" stroke="#0000e0" stroke-width="1" shape-rendering="crispEdges"/><polyline points="11.9,551.3 20.0,554.6 28.1,569.5 36.2,559.5 44.4,566.9 52.5,576.4 60.6,576.4 68.7,574.4 76.8,573.4 84.9,584.4 93.1,581.3 101.2,583.2 109.3,596.1 117.4,591.9 125.5,601.4 133.6,592.3 141.7,576.4 149.9,576.4 158.0,563.4 166.1,569.5 174.2,566.4 182.3,580.4 190.4,565.7 198.5,576.2 206.7,571.6 214.8,574.4 222.9,574.4 231.0,570.0 239.1,573.0 247.2,581.3 255.4,573.0 263.5,571.3 271.6,572.7 279.7,549.4 287.8,550.3 295.9,551.7 304.0,559.4 312.2,547.6 320.3,543.6 328.4,533.3 336.5,527.5 344.6,538.0 352.7,531.4 360.8,530.3 369.0,534.2 377.1,522.3 385.2,534.3 393.3,534.3 401.4,536.3 409.5,537.3 417.6,537.6 425.8,537.0 433.9,527.7 442.0,538.6 450.1,532.8 458.2,528.0 466.3,529.6 474.5,529.3" fill="none" stroke="#e00000" stroke-width="1" shape-rendering="crispEdges"/></svg>
<div class="c" style="left:3px;top:4px;color:#0000ff"><svg class="k" width="24" height="11" viewBox="0 0 24 11" shape-rendering="crispEdges" role="img" style=""><title>국고</title><path fill="#0000ff" d="M2 0h8v1h-8zM14 0h8v1h-8zM9 1h1v1h-1zM21 1h1v1h-1zM9 2h1v1h-1zM21 2h1v1h-1zM9 3h1v1h-1zM21 3h1v1h-1zM1 4h10v1h-10zM21 4h1v1h-1zM6 5h1v1h-1zM17 5h1v1h-1zM21 5h1v1h-1zM6 6h1v1h-1zM17 6h1v1h-1zM21 6h1v1h-1zM2 7h8v1h-8zM17 7h1v1h-1zM20 7h1v1h-1zM9 8h1v1h-1zM17 8h1v1h-1zM9 9h1v1h-1zM13 9h10v1h-10zM9 10h1v1h-1z"/></svg><span class="t">1Y</span></div>
<div class="c" style="left:45px;top:4px;color:#0000ff"><svg class="k" width="24" height="11" viewBox="0 0 24 11" shape-rendering="crispEdges" role="img" style=""><title>국고</title><path fill="#0000ff" d="M2 0h8v1h-8zM14 0h8v1h-8zM9 1h1v1h-1zM21 1h1v1h-1zM9 2h1v1h-1zM21 2h1v1h-1zM9 3h1v1h-1zM21 3h1v1h-1zM1 4h10v1h-10zM21 4h1v1h-1zM6 5h1v1h-1zM17 5h1v1h-1zM21 5h1v1h-1zM6 6h1v1h-1zM17 6h1v1h-1zM21 6h1v1h-1zM2 7h8v1h-8zM17 7h1v1h-1zM20 7h1v1h-1zM9 8h1v1h-1zM17 8h1v1h-1zM9 9h1v1h-1zM13 9h10v1h-10zM9 10h1v1h-1z"/></svg><span class="t">2Y</span></div>
<div class="c" style="left:87px;top:4px;color:#f00000"><svg class="k" width="24" height="11" viewBox="0 0 24 11" shape-rendering="crispEdges" role="img" style=""><title>국고</title><path fill="#f00000" d="M2 0h8v1h-8zM14 0h8v1h-8zM9 1h1v1h-1zM21 1h1v1h-1zM9 2h1v1h-1zM21 2h1v1h-1zM9 3h1v1h-1zM21 3h1v1h-1zM1 4h10v1h-10zM21 4h1v1h-1zM6 5h1v1h-1zM17 5h1v1h-1zM21 5h1v1h-1zM6 6h1v1h-1zM17 6h1v1h-1zM21 6h1v1h-1zM2 7h8v1h-8zM17 7h1v1h-1zM20 7h1v1h-1zM9 8h1v1h-1zM17 8h1v1h-1zM9 9h1v1h-1zM13 9h10v1h-10zM9 10h1v1h-1z"/></svg><span class="t">3Y</span></div>
<div class="c" style="left:129px;top:4px;color:#8080ff"><svg class="k" width="24" height="11" viewBox="0 0 24 11" shape-rendering="crispEdges" role="img" style=""><title>한전</title><path fill="#8080ff" d="M3 0h3v1h-3zM8 0h1v1h-1zM13 0h7v1h-7zM21 0h1v1h-1zM1 1h6v1h-6zM8 1h1v1h-1zM16 1h1v1h-1zM21 1h1v1h-1zM8 2h1v1h-1zM16 2h1v1h-1zM21 2h1v1h-1zM3 3h3v1h-3zM8 3h1v1h-1zM16 3h1v1h-1zM19 3h3v1h-3zM2 4h1v1h-1zM6 4h1v1h-1zM8 4h3v1h-3zM15 4h1v1h-1zM17 4h1v1h-1zM21 4h1v1h-1zM2 5h1v1h-1zM6 5h1v1h-1zM8 5h1v1h-1zM14 5h1v1h-1zM18 5h1v1h-1zM21 5h1v1h-1zM3 6h3v1h-3zM8 6h1v1h-1zM13 6h1v1h-1zM19 6h1v1h-1zM21 6h1v1h-1zM2 7h1v1h-1zM8 7h1v1h-1zM14 7h1v1h-1zM21 7h1v1h-1zM2 8h1v1h-1zM14 8h1v1h-1zM2 9h8v1h-8zM14 9h8v1h-8z"/></svg><span class="t">3Y</span></div>
<div class="c" style="left:171px;top:4px;color:#66cc00"><svg class="k" width="24" height="11" viewBox="0 0 24 11" shape-rendering="crispEdges" role="img" style=""><title>회사</title><path fill="#66cc00" d="M3 0h4v1h-4zM9 0h1v1h-1zM16 0h1v1h-1zM20 0h1v1h-1zM9 1h1v1h-1zM16 1h1v1h-1zM20 1h1v1h-1zM2 2h6v1h-6zM9 2h1v1h-1zM16 2h1v1h-1zM20 2h1v1h-1zM3 3h3v1h-3zM9 3h1v1h-1zM16 3h1v1h-1zM20 3h1v1h-1zM2 4h1v1h-1zM6 4h1v1h-1zM9 4h1v1h-1zM15 4h2v1h-2zM20 4h1v1h-1zM2 5h1v1h-1zM6 5h1v1h-1zM9 5h1v1h-1zM15 5h1v1h-1zM17 5h1v1h-1zM20 5h3v1h-3zM3 6h3v1h-3zM9 6h1v1h-1zM15 6h1v1h-1zM18 6h1v1h-1zM20 6h1v1h-1zM4 7h1v1h-1zM9 7h1v1h-1zM14 7h1v1h-1zM18 7h1v1h-1zM20 7h1v1h-1zM4 8h1v1h-1zM7 8h3v1h-3zM14 8h1v1h-1zM18 8h1v1h-1zM20 8h1v1h-1zM1 9h7v1h-7zM9 9h1v1h-1zM13 9h1v1h-1zM19 9h2v1h-2zM9 10h1v1h-1zM20 10h1v1h-1z"/></svg><span class="t">AA</span><span class="t wl">-</span></div>
<div class="c s" style="left:501px;top:40px;width:30px">3,000</div>
<div class="c s" style="left:501px;top:72px;width:30px">2,900</div>
<div class="c s" style="left:501px;top:104px;width:30px">2,800</div>
<div class="c s" style="left:501px;top:136px;width:30px">2,700</div>
<div class="c s" style="left:501px;top:169px;width:30px">2,600</div>
<div class="c s" style="left:501px;top:201px;width:30px">2,500</div>
<div class="c s" style="left:501px;top:233px;width:30px">2,400</div>
<div class="c s" style="left:501px;top:265px;width:30px">2,300</div>
<div class="c s" style="left:501px;top:297px;width:30px">2,200</div>
<div class="c s" style="left:11px;top:315px">04</div>
<div class="c s" style="left:59px;top:315px">04/22</div>
<div class="c s" style="left:116px;top:315px">05</div>
<div class="c s" style="left:141px;top:315px">05/09</div>
<div class="c s" style="left:189px;top:315px">05/19</div>
<div class="c s" style="left:271px;top:315px">06</div>
<div class="c s" style="left:303px;top:315px">06/10</div>
<div class="c s" style="left:352px;top:315px">06/18</div>
<div class="c s" style="left:425px;top:315px">07</div>
<div class="c s" style="left:485px;top:315px">07/10</div>
</div>
<div class="panel" id="t2" style="left:546px;top:314px;width:425px;height:331px;border:1px solid #6b8096">
<div class="abs" style="left:0px;top:0px;width:423px;height:27px;background:#296bb0"></div>
<div class="abs" style="left:0px;top:27px;width:85px;height:302px;background:#d6e2ee"></div>
<div class="abs" style="left:85px;top:0px;width:1px;height:27px;background:#5289c5"></div>
<div class="ln" style="left:85px;top:27px;width:1px;height:302px"></div>
<div class="abs" style="left:170px;top:0px;width:1px;height:27px;background:#5289c5"></div>
<div class="ln" style="left:170px;top:27px;width:1px;height:302px"></div>
<div class="abs" style="left:255px;top:0px;width:1px;height:27px;background:#5289c5"></div>
<div class="ln" style="left:255px;top:27px;width:1px;height:302px"></div>
<div class="abs" style="left:339px;top:0px;width:1px;height:27px;background:#5289c5"></div>
<div class="ln" style="left:339px;top:27px;width:1px;height:302px"></div>
<div class="ln" style="left:0px;top:53px;width:423px;height:1px"></div>
<div class="ln" style="left:0px;top:80px;width:423px;height:1px"></div>
<div class="ln" style="left:0px;top:107px;width:423px;height:1px"></div>
<div class="ln" style="left:0px;top:135px;width:423px;height:1px"></div>
<div class="ln" style="left:0px;top:162px;width:423px;height:1px"></div>
<div class="ln" style="left:0px;top:189px;width:423px;height:1px"></div>
<div class="ln" style="left:0px;top:217px;width:423px;height:1px"></div>
<div class="ln" style="left:0px;top:244px;width:423px;height:1px"></div>
<div class="ln" style="left:0px;top:271px;width:423px;height:1px"></div>
<div class="ln" style="left:0px;top:299px;width:423px;height:1px"></div>
<div class="ln" style="left:0px;top:326px;width:423px;height:1px"></div>
<div class="c h" style="left:0px;top:7px;width:71px"><svg class="k" width="24" height="11" viewBox="0 0 24 11" shape-rendering="crispEdges" role="img" style=""><title>국고</title><path fill="#fff" d="M2 0h8v1h-8zM14 0h8v1h-8zM9 1h1v1h-1zM21 1h1v1h-1zM9 2h1v1h-1zM21 2h1v1h-1zM9 3h1v1h-1zM21 3h1v1h-1zM1 4h10v1h-10zM21 4h1v1h-1zM6 5h1v1h-1zM17 5h1v1h-1zM21 5h1v1h-1zM6 6h1v1h-1zM17 6h1v1h-1zM21 6h1v1h-1zM2 7h8v1h-8zM17 7h1v1h-1zM20 7h1v1h-1zM9 8h1v1h-1zM17 8h1v1h-1zM9 9h1v1h-1zM13 9h10v1h-10zM9 10h1v1h-1z"/></svg><span class="t">5Y</span></div>
<div class="c h" style="left:86px;top:7px;width:84px"><span class="t">11</span><svg class="k" width="12" height="11" viewBox="0 0 12 11" shape-rendering="crispEdges" role="img" style=""><title>시</title><path fill="#fff" d="M4 0h1v1h-1zM9 0h1v1h-1zM4 1h1v1h-1zM9 1h1v1h-1zM4 2h1v1h-1zM9 2h1v1h-1zM4 3h1v1h-1zM9 3h1v1h-1zM3 4h2v1h-2zM9 4h1v1h-1zM3 5h1v1h-1zM5 5h1v1h-1zM9 5h1v1h-1zM3 6h1v1h-1zM6 6h1v1h-1zM9 6h1v1h-1zM2 7h1v1h-1zM6 7h1v1h-1zM9 7h1v1h-1zM2 8h1v1h-1zM6 8h1v1h-1zM9 8h1v1h-1zM1 9h1v1h-1zM7 9h1v1h-1zM9 9h1v1h-1zM9 10h1v1h-1z"/></svg><span class="t">30</span><svg class="k" width="12" height="11" viewBox="0 0 12 11" shape-rendering="crispEdges" role="img" style=""><title>분</title><path fill="#fff" d="M2 0h1v1h-1zM9 0h1v1h-1zM2 1h8v1h-8zM2 2h1v1h-1zM9 2h1v1h-1zM2 3h8v1h-8zM1 5h10v1h-10zM6 6h1v1h-1zM2 7h1v1h-1zM6 7h1v1h-1zM2 8h1v1h-1zM2 9h8v1h-8z"/></svg></div>
<div class="c h" style="left:171px;top:7px;width:84px"><span class="t">16</span><svg class="k" width="12" height="11" viewBox="0 0 12 11" shape-rendering="crispEdges" role="img" style=""><title>시</title><path fill="#fff" d="M4 0h1v1h-1zM9 0h1v1h-1zM4 1h1v1h-1zM9 1h1v1h-1zM4 2h1v1h-1zM9 2h1v1h-1zM4 3h1v1h-1zM9 3h1v1h-1zM3 4h2v1h-2zM9 4h1v1h-1zM3 5h1v1h-1zM5 5h1v1h-1zM9 5h1v1h-1zM3 6h1v1h-1zM6 6h1v1h-1zM9 6h1v1h-1zM2 7h1v1h-1zM6 7h1v1h-1zM9 7h1v1h-1zM2 8h1v1h-1zM6 8h1v1h-1zM9 8h1v1h-1zM1 9h1v1h-1zM7 9h1v1h-1zM9 9h1v1h-1zM9 10h1v1h-1z"/></svg><span class="t">00</span><svg class="k" width="12" height="11" viewBox="0 0 12 11" shape-rendering="crispEdges" role="img" style=""><title>분</title><path fill="#fff" d="M2 0h1v1h-1zM9 0h1v1h-1zM2 1h8v1h-8zM2 2h1v1h-1zM9 2h1v1h-1zM2 3h8v1h-8zM1 5h10v1h-10zM6 6h1v1h-1zM2 7h1v1h-1zM6 7h1v1h-1zM2 8h1v1h-1zM2 9h8v1h-8z"/></svg></div>
<div class="c h" style="left:256px;top:7px;width:83px"><svg class="k" width="24" height="11" viewBox="0 0 24 11" shape-rendering="crispEdges" role="img" style=""><title>전기</title><path fill="#fff" d="M1 0h7v1h-7zM9 0h1v1h-1zM13 0h5v1h-5zM21 0h1v1h-1zM4 1h1v1h-1zM9 1h1v1h-1zM18 1h1v1h-1zM21 1h1v1h-1zM4 2h1v1h-1zM9 2h1v1h-1zM18 2h1v1h-1zM21 2h1v1h-1zM4 3h1v1h-1zM7 3h3v1h-3zM18 3h1v1h-1zM21 3h1v1h-1zM3 4h1v1h-1zM5 4h1v1h-1zM9 4h1v1h-1zM18 4h1v1h-1zM21 4h1v1h-1zM2 5h1v1h-1zM6 5h1v1h-1zM9 5h1v1h-1zM17 5h2v1h-2zM21 5h1v1h-1zM1 6h1v1h-1zM7 6h1v1h-1zM9 6h1v1h-1zM17 6h1v1h-1zM21 6h1v1h-1zM2 7h1v1h-1zM9 7h1v1h-1zM15 7h2v1h-2zM21 7h1v1h-1zM2 8h1v1h-1zM13 8h3v1h-3zM21 8h1v1h-1zM2 9h8v1h-8zM21 9h1v1h-1zM21 10h1v1h-1z"/></svg></div>
<div class="c h" style="left:340px;top:7px;width:83px"><svg class="k" width="48" height="11" viewBox="0 0 48 11" shape-rendering="crispEdges" role="img" style=""><title>전기대비</title><path fill="#fff" d="M1 0h7v1h-7zM9 0h1v1h-1zM13 0h5v1h-5zM21 0h1v1h-1zM26 0h4v1h-4zM31 0h1v1h-1zM33 0h1v1h-1zM38 0h1v1h-1zM42 0h1v1h-1zM45 0h1v1h-1zM4 1h1v1h-1zM9 1h1v1h-1zM18 1h1v1h-1zM21 1h1v1h-1zM26 1h1v1h-1zM31 1h1v1h-1zM33 1h1v1h-1zM38 1h1v1h-1zM42 1h1v1h-1zM45 1h1v1h-1zM4 2h1v1h-1zM9 2h1v1h-1zM18 2h1v1h-1zM21 2h1v1h-1zM26 2h1v1h-1zM31 2h1v1h-1zM33 2h1v1h-1zM38 2h1v1h-1zM42 2h1v1h-1zM45 2h1v1h-1zM4 3h1v1h-1zM7 3h3v1h-3zM18 3h1v1h-1zM21 3h1v1h-1zM26 3h1v1h-1zM31 3h1v1h-1zM33 3h1v1h-1zM38 3h1v1h-1zM42 3h1v1h-1zM45 3h1v1h-1zM3 4h1v1h-1zM5 4h1v1h-1zM9 4h1v1h-1zM18 4h1v1h-1zM21 4h1v1h-1zM26 4h1v1h-1zM31 4h1v1h-1zM33 4h1v1h-1zM38 4h5v1h-5zM45 4h1v1h-1zM2 5h1v1h-1zM6 5h1v1h-1zM9 5h1v1h-1zM17 5h2v1h-2zM21 5h1v1h-1zM26 5h1v1h-1zM31 5h3v1h-3zM38 5h1v1h-1zM42 5h1v1h-1zM45 5h1v1h-1zM1 6h1v1h-1zM7 6h1v1h-1zM9 6h1v1h-1zM17 6h1v1h-1zM21 6h1v1h-1zM26 6h1v1h-1zM31 6h1v1h-1zM33 6h1v1h-1zM38 6h1v1h-1zM42 6h1v1h-1zM45 6h1v1h-1zM2 7h1v1h-1zM9 7h1v1h-1zM15 7h2v1h-2zM21 7h1v1h-1zM26 7h1v1h-1zM31 7h1v1h-1zM33 7h1v1h-1zM38 7h1v1h-1zM42 7h1v1h-1zM45 7h1v1h-1zM2 8h1v1h-1zM13 8h3v1h-3zM21 8h1v1h-1zM26 8h1v1h-1zM30 8h2v1h-2zM33 8h1v1h-1zM38 8h1v1h-1zM42 8h1v1h-1zM45 8h1v1h-1zM2 9h8v1h-8zM21 9h1v1h-1zM26 9h4v1h-4zM31 9h1v1h-1zM33 9h1v1h-1zM38 9h5v1h-5zM45 9h1v1h-1zM21 10h1v1h-1zM31 10h1v1h-1zM33 10h1v1h-1zM45 10h1v1h-1z"/></svg></div>
<svg class="abs" style="left:80px;top:20px" width="4" height="4" viewBox="0 0 4 4"><title>정렬</title><path d="M4 0V4H0z" fill="#fff"/></svg>
<div class="c d" style="left:0px;top:34px;width:85px">25/07/09</div>
<div class="c n" style="left:86px;top:34px;width:76.5px">2,634</div>
<div class="c n" style="left:171px;top:34px;width:76.5px">2,636</div>
<div class="c n" style="left:256px;top:34px;width:75.5px">2,635</div>
<div class="c n red" style="left:340px;top:34px;width:78.5px">0,001</div>
<div class="c d" style="left:0px;top:61px;width:85px">25/07/08</div>
<div class="c n" style="left:86px;top:61px;width:76.5px">2,623</div>
<div class="c n" style="left:171px;top:61px;width:76.5px">2,635</div>
<div class="c n" style="left:256px;top:61px;width:75.5px">2,637</div>
<div class="c n blue" style="left:340px;top:61px;width:78.5px"><span class="wr">-</span>0,002</div>
<div class="c d" style="left:0px;top:88px;width:85px">25/07/07</div>
<div class="c n" style="left:86px;top:88px;width:76.5px">2,623</div>
<div class="c n" style="left:171px;top:88px;width:76.5px">2,637</div>
<div class="c n" style="left:256px;top:88px;width:75.5px">2,620</div>
<div class="c n red" style="left:340px;top:88px;width:78.5px">0,017</div>
<div class="c d" style="left:0px;top:116px;width:85px">25/07/04</div>
<div class="c n" style="left:86px;top:116px;width:76.5px">2,615</div>
<div class="c n" style="left:171px;top:116px;width:76.5px">2,620</div>
<div class="c n" style="left:256px;top:116px;width:75.5px">2,595</div>
<div class="c n red" style="left:340px;top:116px;width:78.5px">0,025</div>
<div class="c d" style="left:0px;top:143px;width:85px">25/07/03</div>
<div class="c n" style="left:86px;top:143px;width:76.5px">2,603</div>
<div class="c n" style="left:171px;top:143px;width:76.5px">2,595</div>
<div class="c n" style="left:256px;top:143px;width:75.5px">2,619</div>
<div class="c n blue" style="left:340px;top:143px;width:78.5px"><span class="wr">-</span>0,024</div>
<div class="c d" style="left:0px;top:170px;width:85px">25/07/02</div>
<div class="c n" style="left:86px;top:170px;width:76.5px">2,589</div>
<div class="c n" style="left:171px;top:170px;width:76.5px">2,619</div>
<div class="c n" style="left:256px;top:170px;width:75.5px">2,581</div>
<div class="c n red" style="left:340px;top:170px;width:78.5px">0,038</div>
<div class="c d" style="left:0px;top:198px;width:85px">25/07/01</div>
<div class="c n" style="left:86px;top:198px;width:76.5px">2,592</div>
<div class="c n" style="left:171px;top:198px;width:76.5px">2,581</div>
<div class="c n" style="left:256px;top:198px;width:75.5px">2,591</div>
<div class="c n blue" style="left:340px;top:198px;width:78.5px"><span class="wr">-</span>0,010</div>
<div class="c d" style="left:0px;top:225px;width:85px">25/06/30</div>
<div class="c n" style="left:86px;top:225px;width:76.5px">2,573</div>
<div class="c n" style="left:171px;top:225px;width:76.5px">2,591</div>
<div class="c n" style="left:256px;top:225px;width:75.5px">2,585</div>
<div class="c n red" style="left:340px;top:225px;width:78.5px">0,006</div>
<div class="c d" style="left:0px;top:252px;width:85px">25/06/27</div>
<div class="c n" style="left:86px;top:252px;width:76.5px">2,583</div>
<div class="c n" style="left:171px;top:252px;width:76.5px">2,585</div>
<div class="c n" style="left:256px;top:252px;width:75.5px">2,599</div>
<div class="c n blue" style="left:340px;top:252px;width:78.5px"><span class="wr">-</span>0,014</div>
<div class="c d" style="left:0px;top:280px;width:85px">25/06/26</div>
<div class="c n" style="left:86px;top:280px;width:76.5px">2,607</div>
<div class="c n" style="left:171px;top:280px;width:76.5px">2,599</div>
<div class="c n" style="left:256px;top:280px;width:75.5px">2,619</div>
<div class="c n blue" style="left:340px;top:280px;width:78.5px"><span class="wr">-</span>0,020</div>
<div class="c d" style="left:0px;top:307px;width:85px">25/06/25</div>
<div class="c n" style="left:86px;top:307px;width:76.5px">2,614</div>
<div class="c n" style="left:171px;top:307px;width:76.5px">2,619</div>
<div class="c n" style="left:256px;top:307px;width:75.5px">2,616</div>
<div class="c n red" style="left:340px;top:307px;width:78.5px">0,003</div>
</div>
</body></html>
